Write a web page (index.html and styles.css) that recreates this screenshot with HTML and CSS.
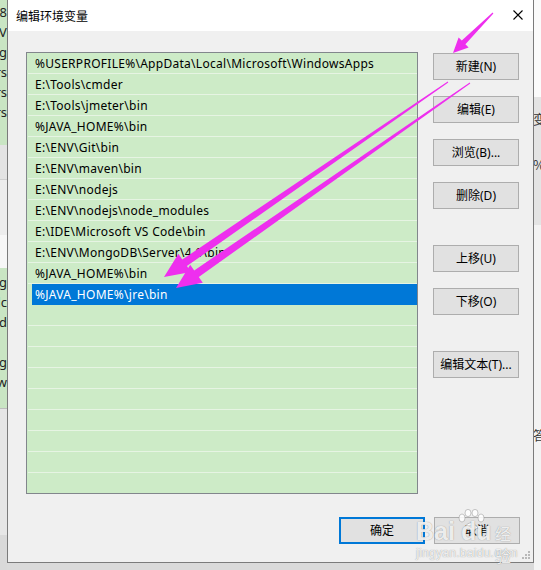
FILE: index.html
```html
<!DOCTYPE html>
<html lang="zh-CN">
<head>
<meta charset="utf-8">
<title>编辑环境变量</title>
<link rel="stylesheet" href="styles.css">
</head>
<body>
<div class="screen">
  <div class="bg-left">
    <div class="bl bl-green">
      <div class="frag">18</div>
      <div class="frag">V</div>
      <div class="frag">g</div>
      <div class="frag">rs</div>
      <div class="frag">rs</div>
      <div class="frag">rs</div>
    </div>
    <div class="bl bl-gray1"></div>
    <div class="bl bl-gray2"></div>
    <div class="bl bl-white"></div>
    <div class="bl bl-green2">
      <div class="frag">g</div>
      <div class="frag">dc</div>
      <div class="frag">d</div>
      <div class="frag"> </div>
      <div class="frag">g</div>
      <div class="frag">w</div>
    </div>
    <div class="bl bl-gray3"></div>
    <div class="bl bl-gray4"></div>
  </div>

  <div class="dialog">
    <div class="titlebar">
      <span class="title">编辑环境变量</span>
      <svg class="close" width="10" height="10" viewBox="0 0 10 10"><path d="M0.5 0.5 L9.5 9.5 M9.5 0.5 L0.5 9.5" stroke="#000" stroke-width="1.1" fill="none"/></svg>
    </div>
    <div class="content">
      <div class="main">
        <div class="list">
          <div class="row">%USERPROFILE%\AppData\Local\Microsoft\WindowsApps</div>
          <div class="row">E:\Tools\cmder</div>
          <div class="row">E:\Tools\jmeter\bin</div>
          <div class="row">%JAVA_HOME%\bin</div>
          <div class="row">E:\ENV\Git\bin</div>
          <div class="row">E:\ENV\maven\bin</div>
          <div class="row">E:\ENV\nodejs</div>
          <div class="row">E:\ENV\nodejs\node_modules</div>
          <div class="row">E:\IDE\Microsoft VS Code\bin</div>
          <div class="row">E:\ENV\MongoDB\Server\4.0\bin</div>
          <div class="row">%JAVA_HOME%\bin</div>
          <div class="row sel">%JAVA_HOME%\jre\bin</div>
          <div class="row"></div>
          <div class="row"></div>
          <div class="row"></div>
          <div class="row"></div>
          <div class="row"></div>
          <div class="row"></div>
          <div class="row"></div>
          <div class="row"></div>
          <div class="row last"></div>
        </div>
        <div class="buttons">
          <button class="btn">新建(N)</button>
          <button class="btn">编辑(E)</button>
          <button class="btn">浏览(B)...</button>
          <button class="btn">删除(D)</button>
          <button class="btn spaced">上移(U)</button>
          <button class="btn">下移(O)</button>
          <button class="btn spaced">编辑文本(T)...</button>
        </div>
      </div>
      <div class="footer">
        <button class="btn primary">确定</button>
        <button class="btn">取消</button>
      </div>
    </div>
    <svg class="grip" width="9" height="9" viewBox="0 0 9 9">
      <rect x="6" y="0" width="2" height="2" fill="#b8b8b8"/>
      <rect x="3" y="3" width="2" height="2" fill="#b8b8b8"/>
      <rect x="6" y="3" width="2" height="2" fill="#b8b8b8"/>
      <rect x="0" y="6" width="2" height="2" fill="#b8b8b8"/>
      <rect x="3" y="6" width="2" height="2" fill="#b8b8b8"/>
      <rect x="6" y="6" width="2" height="2" fill="#b8b8b8"/>
    </svg>
    <div class="watermark">
      <div class="wm-logo">
        <span class="wm-bai">Bai</span>
        <svg class="wm-paw" width="32" height="22" viewBox="0 0 32 22">
          <g fill="rgba(255,255,255,0.85)" stroke="rgba(140,140,140,0.6)" stroke-width="0.8">
            <ellipse cx="7" cy="9" rx="3" ry="4"/>
            <ellipse cx="13" cy="4" rx="3" ry="3.6"/>
            <ellipse cx="20" cy="4" rx="3" ry="3.6"/>
            <ellipse cx="26" cy="9" rx="3" ry="4"/>
            <path d="M9 19 Q16 8 23 19 Q16 23 9 19 Z"/>
          </g>
        </svg>
        <span class="wm-du">du</span>
        <span class="wm-jy">经验</span>
      </div>
      <div class="wm-url">jingyan.baidu.com</div>
    </div>
  </div>

  <div class="bg-right">
    <div class="br br-white"></div>
    <div class="br br-gray">
      <div class="frag2">变</div>
      <div class="frag2">%</div>
    </div>
    <div class="br br-light">
      <div class="frag3">答</div>
    </div>
  </div>
</div>

<svg class="arrows" width="541" height="570" viewBox="0 0 541 570">
  <g fill="#ee2fee">
    <polygon points="493.4,13.4 465.4,44.2 468.6,47.4 453,53 458.6,37.4 461.8,40.6 492.6,12.6"/>
    <polygon points="448.3,82.4 186.9,266.1 190.9,271.9 164,277 178.4,253.8 182.3,259.5 447.7,81.6"/>
    <polygon points="470.3,83.4 198.8,277.0 202.8,282.7 176,288 190.2,264.7 194.2,270.4 469.7,82.6"/>
  </g>
</svg>
</body>
</html>
```

FILE: styles.css
```css
* { box-sizing: border-box; }
html, body { margin: 0; padding: 0; }
body {
  width: 541px;
  height: 570px;
  overflow: hidden;
  background: #dadada;
  font-family: "Noto Sans", "Noto Sans CJK SC", sans-serif;
  font-size: 12px;
  color: #000;
  position: relative;
}
.screen {
  display: flex;
  height: 570px;
  align-items: flex-start;
}

/* background window, left */
.bg-left {
  width: 7px;
  height: 570px;
  display: flex;
  flex-direction: column;
  overflow: hidden;
}
.bl { width: 7px; overflow: hidden; }
.bl-green { height: 145px; background: #c9e5c3; padding-top: 2px; }
.bl-gray1 { height: 35px; background: #e3e3e3; border-bottom: 1px solid #cfcfcf; }
.bl-gray2 { height: 55px; background: #ededed; }
.bl-white { height: 33px; background: #f7f7f7; }
.bl-green2 { height: 140px; background: #c9e5c3; padding-top: 4px; }
.bl-gray3 { height: 127px; background: #e6e6e6; border-top: 1px solid #bdbdbd; }
.bl-gray4 { flex: 1; background: #d9d9d9; }
.frag {
  height: 20px;
  line-height: 20px;
  font-size: 13px;
  white-space: nowrap;
  direction: rtl;
  text-align: left;
  margin-left: -1px;
  color: #222;
}

/* dialog */
.dialog {
  width: 527px;
  flex: none;
  border: 1px solid #7b7b7b;
  border-top: none;
  background: #f0f0f0;
  position: relative;
}
.titlebar {
  height: 31px;
  background: #fff;
  display: flex;
  align-items: center;
  justify-content: space-between;
  padding: 0 10px 1px 8px;
}
.title { font-family: "Noto Sans CJK SC", sans-serif; font-size: 12px; color: #000; }
.close { display: block; }
.content {
  padding: 21px 13px 18px 18px;
}
.main { display: flex; align-items: flex-start; }
.list {
  width: 392px;
  height: 442px;
  border: 1px solid #82868c;
  background: #cdebc7;
  overflow: hidden;
}
.row {
  height: 21px;
  line-height: 18px;
  padding-top: 2px;
  margin-left: 1px;
  padding-left: 7px;
  border-bottom: 1px solid #e6f4e3;
  white-space: nowrap;
  overflow: hidden;
  letter-spacing: 0.28px;
}
.row.last { border-bottom: none; }
.row.sel {
  margin-left: 5px;
  padding-left: 3px;
  background: #0078d7;
  color: #fff;
  border-bottom-color: #0078d7;
}
.buttons {
  margin-left: 15px;
  width: 86px;
  padding-top: 1px;
  display: flex;
  flex-direction: column;
  gap: 16px;
}
.btn {
  width: 86px;
  height: 27px;
  padding: 0;
  background: #e1e1e1;
  border: 1px solid #adadad;
  font-family: "Noto Sans", "Noto Sans CJK SC", sans-serif;
  font-size: 12px;
  color: #000;
  line-height: 1;
}
.btn.spaced { margin-top: 20px; }
.btn.primary { border: 2px solid #0078d7; }
.footer {
  margin-top: 23px;
  display: flex;
  justify-content: flex-end;
  gap: 9px;
}
.grip { position: absolute; right: 2px; bottom: 2px; }

/* watermark */
.watermark {
  position: absolute;
  left: 405px;
  top: 503px;
  width: 110px;
  pointer-events: none;
  color: rgba(255, 255, 255, 0.85);
  text-shadow: 0 0 1px rgba(110, 110, 110, 0.8);
}
.wm-logo { position: relative; height: 44px; }
.wm-bai {
  position: absolute; left: 3px; top: 14px;
  font-family: "Liberation Sans", sans-serif; font-weight: bold; font-size: 25px; line-height: 28px;
}
.wm-paw { position: absolute; left: 42px; top: 6px; }
.wm-du {
  position: absolute; left: 48px; top: 14px;
  font-family: "Liberation Sans", sans-serif; font-weight: bold; font-size: 25px; line-height: 28px;
}
.wm-jy {
  position: absolute; left: 82px; top: 19px;
  font-family: "Noto Sans CJK SC", sans-serif; font-size: 16px; line-height: 22px;
}
.wm-url {
  margin-left: 3px;
  font-family: "Liberation Sans", sans-serif;
  font-size: 12px;
  letter-spacing: 0.3px;
  line-height: 12px;
}

/* background window, right */
.bg-right {
  width: 7px;
  height: 570px;
  display: flex;
  flex-direction: column;
  overflow: hidden;
}
.br { width: 7px; overflow: hidden; }
.br-white { height: 97px; background: #fbfbfb; }
.br-gray { height: 128px; background: #e4e4e4; padding-top: 10px; }
.br-light { flex: 1; background: #f3f3f3; padding-top: 198px; }
.frag2, .frag3 {
  height: 24px;
  line-height: 24px;
  font-family: "Noto Sans CJK SC", sans-serif;
  font-size: 13px;
  color: #333;
  margin-left: -1px;
  margin-bottom: 22px;
}

.arrows { position: absolute; left: 0; top: 0; pointer-events: none; }
```
